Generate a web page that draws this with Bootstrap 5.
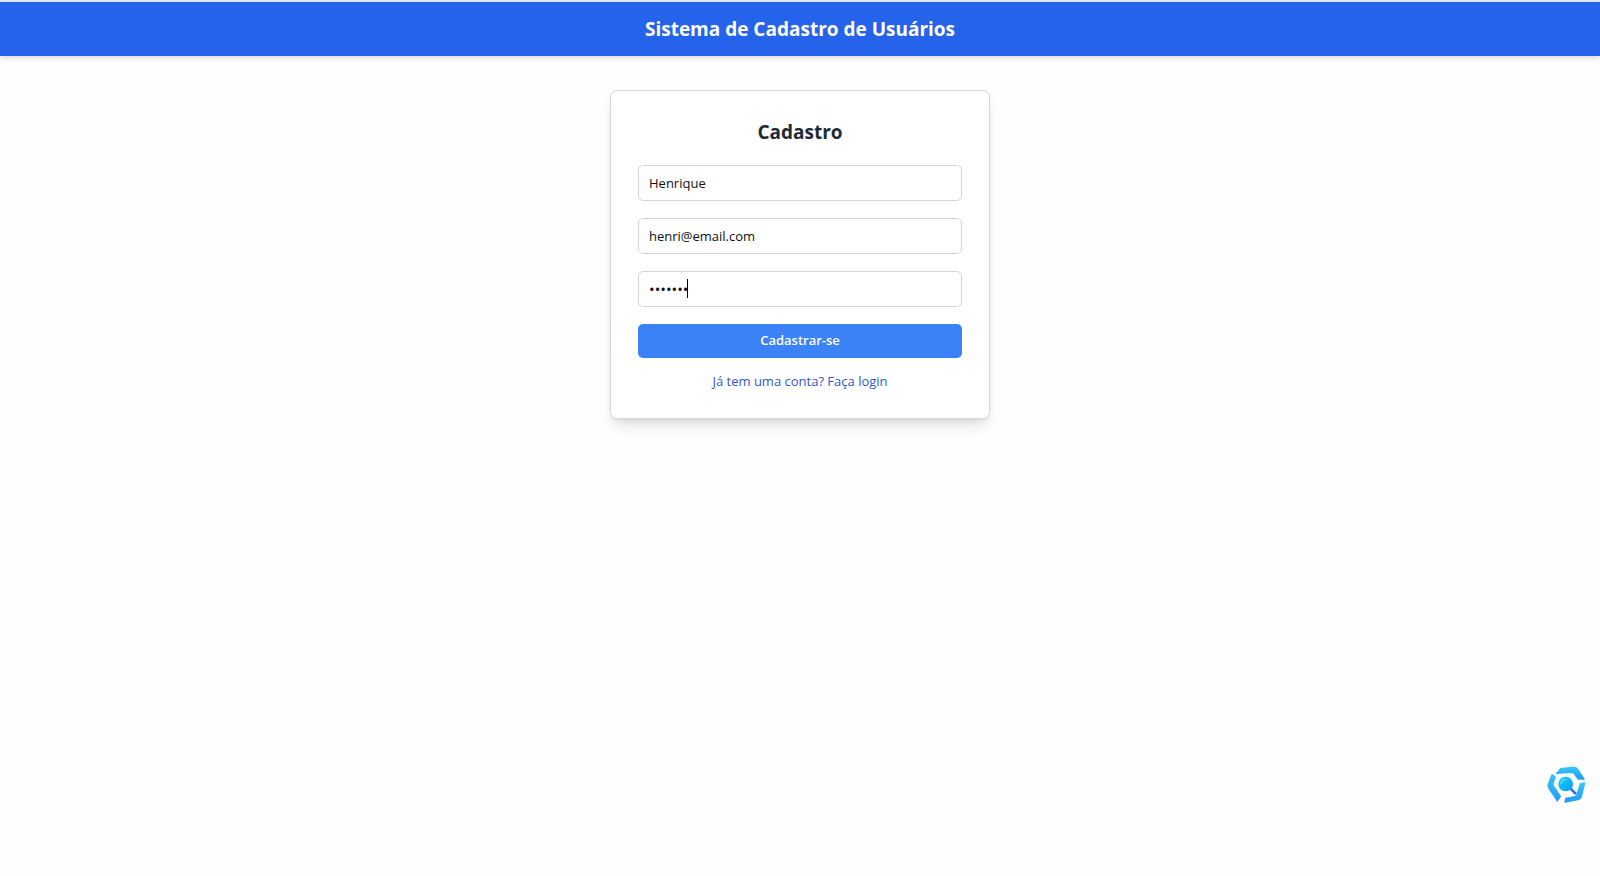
<!DOCTYPE html>
<html lang="pt-BR">
<head>
<meta charset="utf-8">
<meta name="viewport" content="width=device-width, initial-scale=1">
<title>Sistema de Cadastro de Usuários</title>
<link href="https://cdn.jsdelivr.net/npm/bootstrap@5.3.0/dist/css/bootstrap.min.css" rel="stylesheet">
<style>
  body { font-family: "Segoe UI", "Open Sans", "Noto Sans", sans-serif; font-size: 13px; background: #fefefe; }
  .site-header { background: #2563eb; border-top: 2px solid #dbe7fb; padding: 12px 16px; box-shadow: 0 2px 5px rgba(0,0,0,.15); }
  .site-title { font-size: 19px; line-height: 30px; font-weight: 700; }
  .signup { max-width: 380px; margin-top: 34px; padding: 27px; border: 1px solid #d3d9df; border-radius: 7px; background: #fff; box-shadow: 0 9px 14px -3px rgba(0,0,0,.12), 0 3px 6px -3px rgba(0,0,0,.1); }
  .signup-title { font-size: 19px; line-height: 28px; font-weight: 700; color: #1f2937; margin-bottom: 19px; }
  .signup .form-control { height: 36px; padding: 6px 10px; font-size: 13px; line-height: 22px; color: #111; border-color: #d1d5db; border-radius: 5px; }
  .signup .form-control[type=password] { font-size: 15px; }
  .stack { gap: 17px; }
  .caret { position: absolute; left: 49px; top: 8px; width: 1px; height: 19px; background: #000; }
  .btn-signup { height: 34px; padding: 0; font-size: 13px; font-weight: 600; color: #fff; background: #3b82f6; border: 0; border-radius: 5px; }
  .btn-signup:hover { background: #2563eb; color: #fff; }
  .login-link { line-height: 20px; color: #3457cf; margin-top: 13px; }
  .helper { position: fixed; right: 14px; bottom: 72px; width: 39px; height: 38px; }
</style>
</head>
<body class="d-flex flex-column min-vh-100">
<header class="site-header text-center text-white">
  <h1 class="site-title m-0">Sistema de Cadastro de Usuários</h1>
</header>
<main class="container-fluid flex-grow-1">
  <section class="signup mx-auto">
    <h2 class="signup-title text-center">Cadastro</h2>
    <form class="stack d-flex flex-column">
      <input class="form-control" type="text" aria-label="Nome" value="Henrique">
      <input class="form-control" type="email" aria-label="Email" value="henri@email.com">
      <div class="position-relative">
        <input class="form-control" type="password" aria-label="Senha" value="1234567">
        <span class="caret"></span>
      </div>
      <button class="btn btn-signup w-100" type="button">Cadastrar-se</button>
    </form>
    <div class="login-link text-center"><a class="text-decoration-none text-reset" href="#">Já tem uma conta? Faça login</a></div>
  </section>
</main>
<button class="helper btn p-0 border-0 d-flex" type="button" aria-label="Pesquisar">
  <svg width="39" height="38" viewBox="49 47 117 114">
    <defs>
      <linearGradient id="ring" x1="0" y1="0" x2="0" y2="1"><stop offset="0" stop-color="#35c5fb"/><stop offset="1" stop-color="#259bfb"/></linearGradient>
      <linearGradient id="lens" x1="0" y1="0" x2="1" y2="1"><stop offset="0" stop-color="#12d3f5"/><stop offset="1" stop-color="#1298f5"/></linearGradient>
    </defs>
    <g fill="url(#ring)" stroke="url(#ring)" stroke-width="4" stroke-linejoin="round">
      <path d="M78 69 90 55 124 51 Q136 50 141 57L160 86 143 86 130 69 Q127 66 122 66Z"/>
      <path d="M64 73 74 80 67 99 Q66 104 69 108L89 138 80 152 55 114 Q51 108 53 102Z"/>
      <path d="M149 100 162 98 152 138 Q150 146 141 148L103 155 105 144 132 139 Q138 138 139 133Z"/>
    </g>
    <path d="M122 117 134 129" stroke="#2f6bea" stroke-width="8" stroke-linecap="round"/>
    <circle cx="105" cy="101" r="22" fill="url(#lens)"/>
    <path d="M91 100Q93 88 104 87" fill="none" stroke="#5ae4f8" stroke-width="4" stroke-linecap="round"/>
  </svg>
</button>
<script src="https://cdn.jsdelivr.net/npm/bootstrap@5.3.0/dist/js/bootstrap.bundle.min.js"></script>
</body>
</html>
